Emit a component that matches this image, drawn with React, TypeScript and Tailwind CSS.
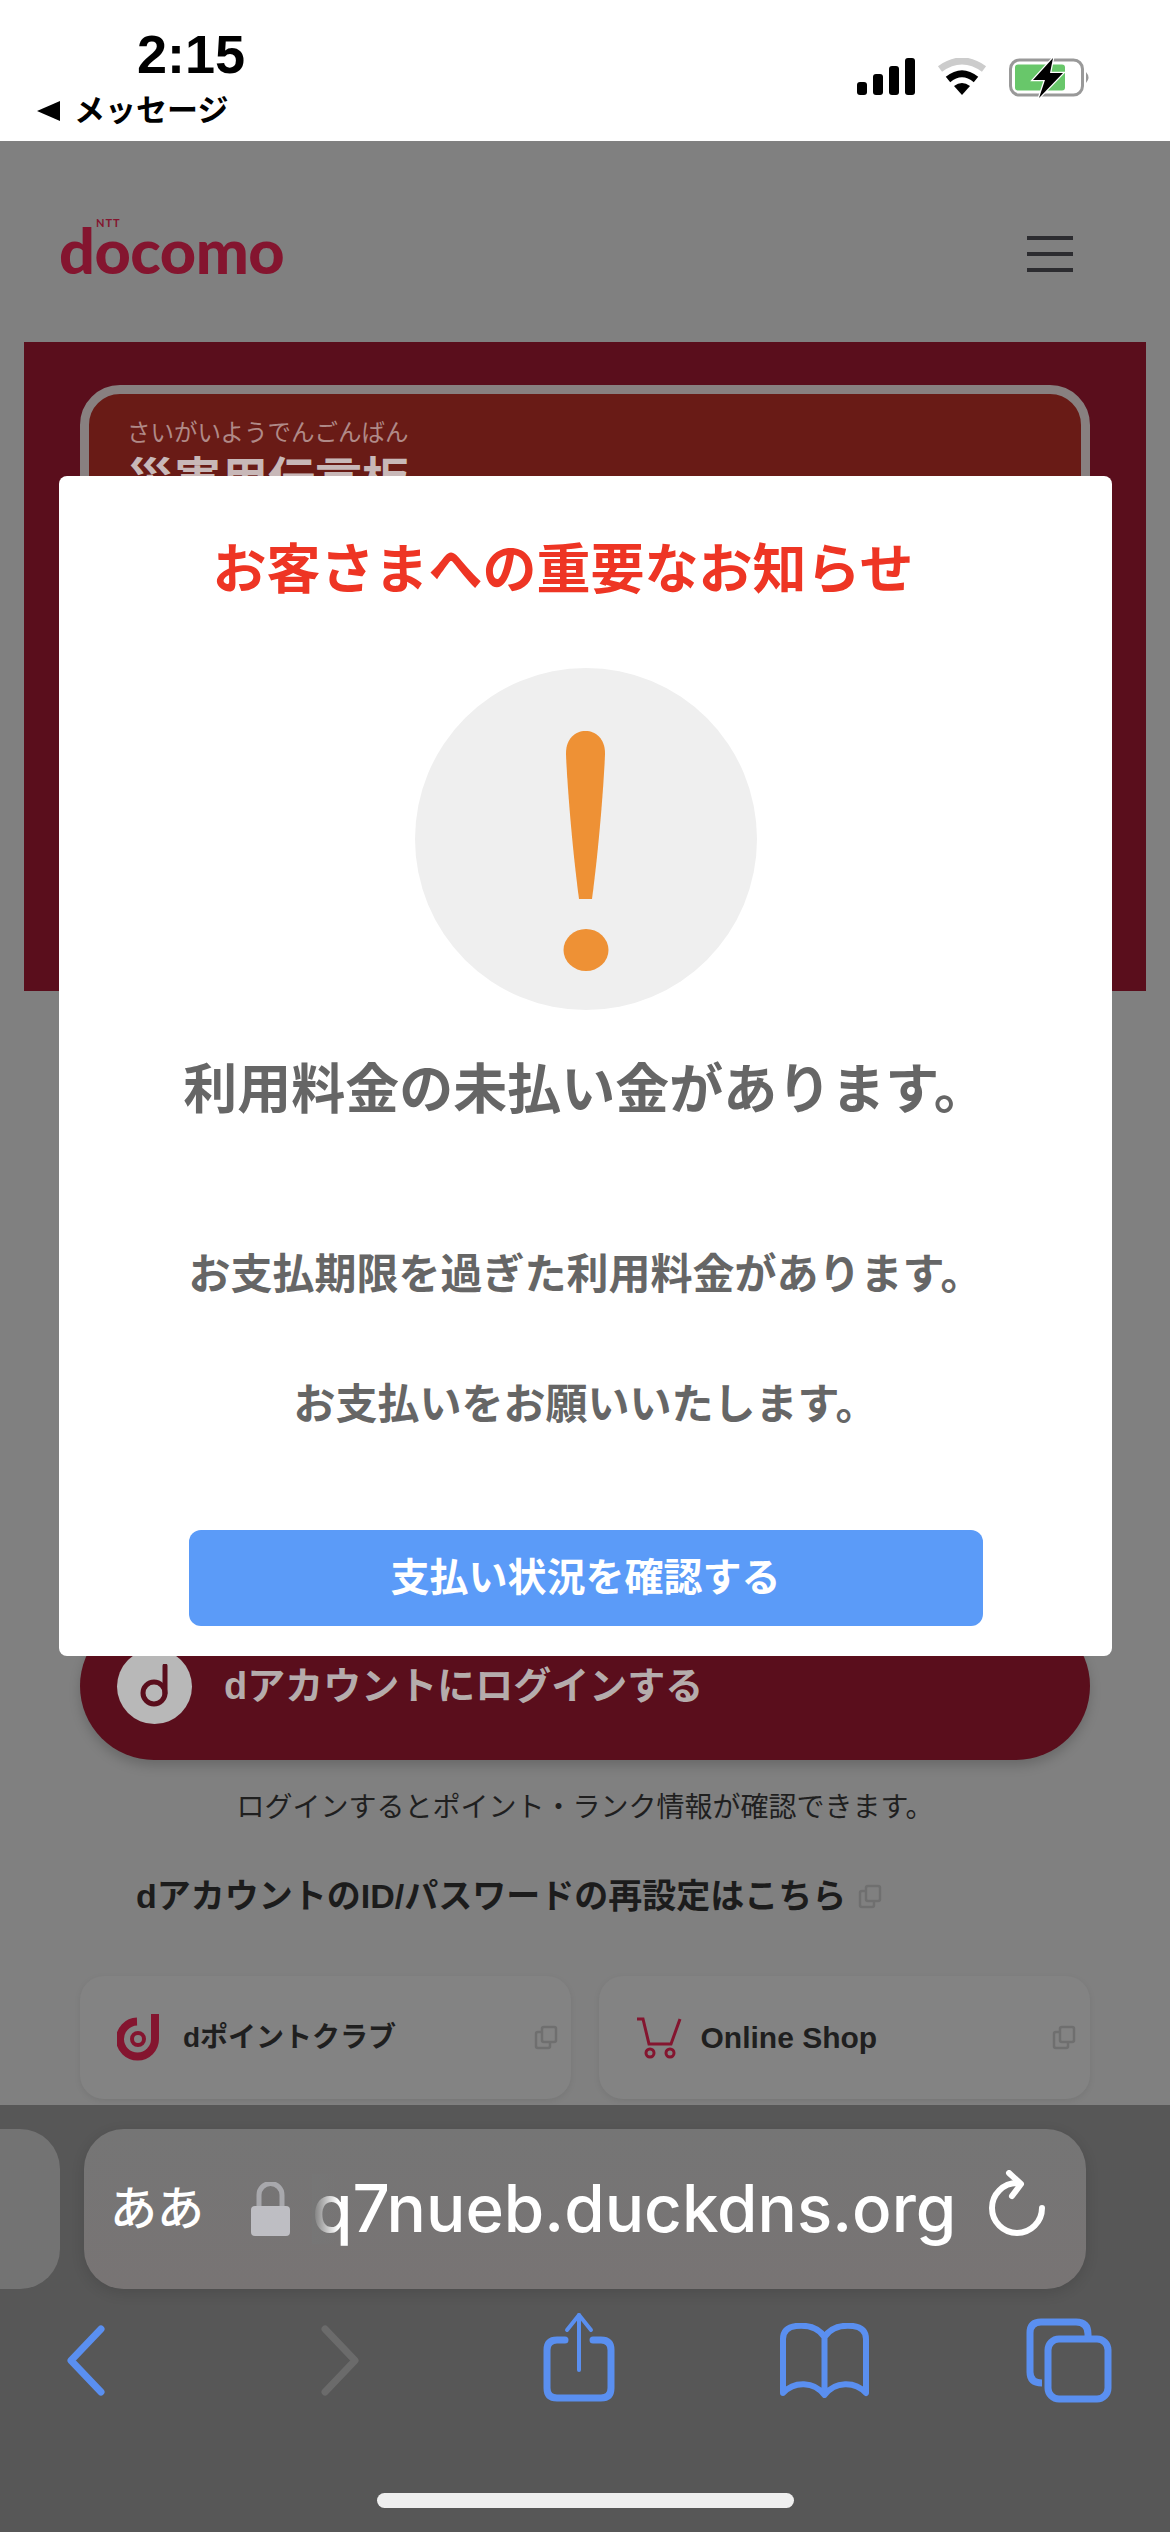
import React from 'react';

const ExternalIcon = () => (
  <svg width="24" height="25" viewBox="0 0 24 25" fill="none" stroke="#6f6f6f" strokeWidth="2.5">
    <rect x="8" y="2" width="14" height="15" rx="2" />
    <path d="M8 7H4Q2 7 2 9V21Q2 23 4 23H14Q16 23 16 21V17" />
  </svg>
);

const DLogo = () => (
  <svg width="46" height="47" viewBox="0 0 46 47" fill="none" stroke="#84152f" strokeWidth="8">
    <path d="M38 0V25A17.5 17.5 0 1 1 20 7.5" />
    <circle cx="21" cy="25" r="6" strokeWidth="4" />
  </svg>
);

const CartIcon = () => (
  <svg width="46" height="42" viewBox="0 0 46 42" fill="none" stroke="#84152f" strokeWidth="3">
    <path d="M1 2H7L13 27H35L44 2" />
    <circle cx="14" cy="36" r="4" />
    <circle cx="34" cy="36" r="4" />
  </svg>
);

export default function App() {
  return (
    <div className="relative flex h-[2532px] w-[1170px] flex-col overflow-hidden bg-[#808080] font-['Liberation_Sans','Noto_Sans_CJK_JP',sans-serif]">
      {/* iOS status bar */}
      <div className="flex h-[141px] shrink-0 justify-between bg-white">
        <div className="flex flex-col">
          <span className="ml-[137px] mt-[34px] text-[54px] font-bold leading-[40px] text-black">2:15</span>
          <div className="ml-[37px] mt-[22px] flex items-center gap-[14px]">
            <svg width="23" height="20" viewBox="0 0 23 20">
              <path d="M23 0V20L0 10Z" fill="#000" />
            </svg>
            <span className="text-[31px] font-bold leading-[30px] text-black">メッセージ</span>
          </div>
        </div>
        <div className="mr-[79px] mt-[58px] flex items-start gap-[22px]">
          <svg width="58" height="37" viewBox="0 0 58 37">
            <rect x="0" y="24" width="10" height="13" rx="3" />
            <rect x="16" y="16" width="10" height="21" rx="3" />
            <rect x="32" y="8" width="10" height="29" rx="3" />
            <rect x="48" y="0" width="10" height="37" rx="3" />
          </svg>
          <svg width="50" height="37" viewBox="0 0 50 37" fill="none">
            <path d="M3 11Q25 -5 47 11" stroke="#cccccc" strokeWidth="7" />
            <path d="M11 21.5Q25 10 39 21.5" stroke="#000" strokeWidth="7" />
            <path d="M25 37L17 28Q25 22 33 28Z" fill="#000" />
          </svg>
          <svg width="82" height="40" viewBox="0 0 82 40" fill="none" className="overflow-visible">
            <rect x="1.5" y="2" width="72" height="35" rx="9" stroke="#999999" strokeWidth="3" />
            <path d="M77 14Q82 19.5 77 25Z" fill="#999999" />
            <rect x="6" y="6.5" width="50" height="26" rx="3" fill="#68c76a" />
            <path d="M44 0L24 22H36L30 40L54 15H41Z" fill="#000" stroke="#fff" strokeWidth="2.5" paintOrder="stroke" />
          </svg>
        </div>
      </div>

      {/* dimmed page behind the dialog */}
      <div className="flex flex-1 flex-col">
        <div className="flex h-[201px] shrink-0 items-center justify-between pl-[59px] pr-[97px] pt-[25px]">
          <div className="relative mt-[-8px]">
            <span className="font-['Lato',sans-serif] text-[63px] font-black leading-[62px] tracking-[-0.5px] text-[#84152f]">docomo</span>
            <span className="absolute left-[37px] top-[-2px] font-['Lato',sans-serif] text-[11px] font-bold leading-[12px] tracking-[1px] text-[#84152f]">NTT</span>
          </div>
          <div className="flex w-[46px] flex-col gap-[12px]">
            <div className="h-[4px] bg-[#2c2c30]" />
            <div className="h-[4px] bg-[#2c2c30]" />
            <div className="h-[4px] bg-[#2c2c30]" />
          </div>
        </div>

        <div className="mx-[24px] h-[649px] shrink-0 overflow-hidden bg-[#5a0e1c] px-[56px] pt-[43px]">
          <div className="h-[500px] rounded-[40px] border-[9px] border-[#888080] bg-[#691b16] pl-[38px] pt-[26px]">
            <p className="text-[23.5px] leading-[26px] text-[#b08a88]">さいがいようでんごんばん</p>
            <p className="mt-[6px] text-[47px] font-bold leading-[56px] text-[#c8b8b8]">災害用伝言板</p>
          </div>
        </div>

        <div className="mx-[80px] mt-[621px] flex h-[148px] shrink-0 items-center rounded-full bg-[#5a0e1c] pl-[37px] shadow-[0_6px_12px_rgba(0,0,0,0.18)]">
          <div className="flex h-[75px] w-[75px] items-center justify-center rounded-full bg-[#b8b8b8]">
            <svg width="30" height="44" viewBox="0 0 30 44" fill="none" stroke="#5a0e1c" strokeWidth="5">
              <circle cx="14" cy="29" r="11" />
              <path d="M25 2V29" strokeLinecap="round" />
            </svg>
          </div>
          <span className="ml-[32px] text-[38px] font-bold leading-[44px] text-[#b5acac]">dアカウントにログインする</span>
        </div>

        <p className="mt-[34px] text-center text-[28px] leading-[28px] text-[#1f1f1f]">
          ログインするとポイント・ランク情報が確認できます。
        </p>

        <div className="ml-[136px] mt-[54px] flex items-center gap-[12px]">
          <span className="text-[34px] font-bold leading-[40px] text-[#1c1c1c]">dアカウントのID/パスワードの再設定はこちら</span>
          <ExternalIcon />
        </div>

        <div className="mx-[80px] mt-[60px] flex gap-[28px]">
          <div className="flex h-[123px] flex-1 items-center justify-between rounded-[24px] bg-[#838383] pl-[37px] pr-[13px] shadow-[0_2px_6px_rgba(0,0,0,0.08)]">
            <div className="flex items-center gap-[20px]">
              <DLogo />
              <span className="text-[28px] font-bold leading-[36px] text-[#1f1f1f]">dポイントクラブ</span>
            </div>
            <ExternalIcon />
          </div>
          <div className="flex h-[123px] flex-1 items-center justify-between rounded-[24px] bg-[#838383] pl-[37px] pr-[14px] shadow-[0_2px_6px_rgba(0,0,0,0.08)]">
            <div className="flex items-center gap-[19px]">
              <CartIcon />
              <span className="text-[30px] font-bold leading-[36px] text-[#1f1f1f]">Online Shop</span>
            </div>
            <ExternalIcon />
          </div>
        </div>
      </div>

      {/* Safari toolbar */}
      <div className="flex h-[427px] shrink-0 flex-col bg-[#575757] pt-[24px]">
        <div className="flex h-[160px] gap-[24px]">
          <div className="w-[60px] rounded-r-[40px] bg-[#737373]" />
          <div className="flex w-[1002px] items-center rounded-[40px] bg-gradient-to-b from-[#757575] to-[#787474] shadow-[0_4px_14px_rgba(0,0,0,0.12)]">
            <span className="ml-[26px] text-[47px] font-medium leading-[56px] text-white">ああ</span>
            <svg width="39" height="54" viewBox="0 0 39 54" fill="none" className="ml-[47px]">
              <path d="M8 27V13A11.5 11.5 0 0 1 31 13V27" stroke="#a8a8ac" strokeWidth="5" />
              <rect x="0" y="24" width="39" height="30" rx="4" fill="#bebec3" />
            </svg>
            <span className="relative ml-[22px] w-[639px] whitespace-nowrap font-['Inter',sans-serif] text-[65.5px] font-medium leading-[70px] text-white">
              q7nueb.duckdns.org
              <span className="absolute bottom-0 left-0 top-0 w-[26px] bg-gradient-to-r from-[#767676] to-transparent" />
            </span>
            <svg width="56" height="66" viewBox="0 0 56 66" fill="none" stroke="#fff" strokeWidth="6" strokeLinecap="round" strokeLinejoin="round" className="ml-[38px] mt-[-12px]">
              <path d="M28 13A25 25 0 1 0 53 38" />
              <path d="M20 3L32 14L23 26" />
            </svg>
          </div>
        </div>

        <div className="mt-[23px] flex h-[96px] items-center pl-[66px]">
          <svg width="41" height="71" viewBox="0 0 41 71" fill="none" stroke="#5a8ff0" strokeWidth="7" strokeLinecap="round" strokeLinejoin="round">
            <path d="M35 4L5 35.5L35 67" />
          </svg>
          <svg width="41" height="71" viewBox="0 0 41 71" fill="none" stroke="#6b6b6b" strokeWidth="7" strokeLinecap="round" strokeLinejoin="round" className="ml-[212px]">
            <path d="M6 4L36 35.5L6 67" />
          </svg>
          <svg width="72" height="90" viewBox="0 0 72 90" fill="none" stroke="#5a8ff0" strokeLinecap="round" strokeLinejoin="round" className="ml-[183px] mt-[-6px]">
            <path d="M22 28H14Q4 28 4 38V76Q4 86 14 86H58Q68 86 68 76V38Q68 28 58 28H50" strokeWidth="7" />
            <path d="M36 3V58" strokeWidth="4" />
            <path d="M24 18L36 3L48 18" strokeWidth="4" />
          </svg>
          <svg width="89" height="75" viewBox="0 0 89 75" fill="none" stroke="#5a8ff0" strokeWidth="6" strokeLinejoin="round" className="ml-[165px]">
            <path d="M44.5 14C38 4 26 2 16 3C8 4 3 8 3 16V70C14 58 34 58 44.5 72C55 58 75 58 86 70V16C86 8 81 4 73 3C63 2 51 4 44.5 14ZM44.5 14V72" />
          </svg>
          <svg width="86" height="85" viewBox="0 0 86 85" fill="none" stroke="#5a8ff0" strokeWidth="7" className="ml-[157px]">
            <rect x="22" y="21" width="60" height="60" rx="11" />
            <path d="M16 65Q4 65 4 54V15Q4 4 15 4H50Q62 4 62 16V21" />
          </svg>
        </div>

        <div className="ml-[377px] mt-[85px] h-[15px] w-[417px] rounded-full bg-[#efefef]" />
      </div>

      {/* payment notice dialog */}
      <div className="absolute left-[59px] top-[476px] flex w-[1053px] flex-col items-center rounded-[8px] bg-white pb-[30px] pt-[56px]">
        <h1 className="pr-[45px] text-[54px] font-bold leading-[76px] text-[#ee3524]">お客さまへの重要なお知らせ</h1>
        <div className="mt-[60px] flex h-[342px] w-[342px] items-center justify-center rounded-full bg-[#efefef]">
          <svg width="46" height="240" viewBox="0 0 46 240" className="mt-[24px]">
            <path d="M3 22C3 8 12 0 22.5 0C33 0 42 8 42 22C42 30 38 100 29 168H16C7 100 3 30 3 22Z" fill="#ee9135" />
            <ellipse cx="23" cy="219" rx="22.5" ry="21" fill="#ee9135" />
          </svg>
        </div>
        <h2 className="mt-[50px] text-[54px] font-bold leading-[60px] text-[#666666]">利用料金の未払い金があります。</h2>
        <p className="mt-[125px] text-[42px] font-bold leading-[60px] text-[#666666]">お支払期限を過ぎた利用料金があります。</p>
        <p className="mt-[70px] text-[42px] font-bold leading-[60px] text-[#666666]">お支払いをお願いいたします。</p>
        <button className="mt-[95px] h-[96px] w-[794px] rounded-[12px] bg-[#5b9bf8] text-[39px] font-bold text-white">
          支払い状況を確認する
        </button>
      </div>
    </div>
  );
}
